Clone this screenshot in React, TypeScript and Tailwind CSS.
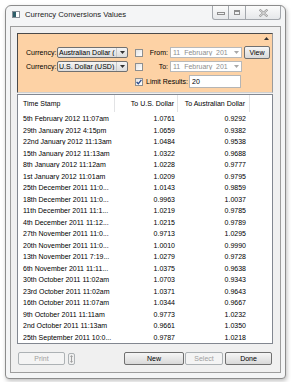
const ROWS: [string, string, string][] = [
  ['5th February 2012 11:07am', '1.0761', '0.9292'],
  ['29th January 2012 4:15pm', '1.0659', '0.9382'],
  ['22nd January 2012 11:13am', '1.0484', '0.9538'],
  ['15th January 2012 11:13am', '1.0322', '0.9688'],
  ['8th January 2012 11:12am', '1.0228', '0.9777'],
  ['1st January 2012 11:01am', '1.0209', '0.9795'],
  ['25th December 2011 11:0...', '1.0143', '0.9859'],
  ['18th December 2011 11:0...', '0.9963', '1.0037'],
  ['11th December 2011 11:1...', '1.0219', '0.9785'],
  ['4th December 2011 11:12...', '1.0215', '0.9789'],
  ['27th November 2011 11:0...', '0.9713', '1.0295'],
  ['20th November 2011 11:0...', '1.0010', '0.9990'],
  ['13th November 2011 7:19...', '1.0279', '0.9728'],
  ['6th November 2011 11:11...', '1.0375', '0.9638'],
  ['30th October 2011 11:02am', '1.0703', '0.9343'],
  ['23rd October 2011 11:02am', '1.0371', '0.9643'],
  ['16th October 2011 11:07am', '1.0344', '0.9667'],
  ['9th October 2011 11:11am', '0.9773', '1.0232'],
  ['2nd October 2011 11:13am', '0.9661', '1.0350'],
  ['25th September 2011 10:0...', '0.9787', '1.0218'],
]

function Arrow({ color = '#333' }: { color?: string }) {
  return (
    <svg width="5" height="3" viewBox="0 0 5 3">
      <path d="M0 0 H5 L2.5 3 Z" fill={color} />
    </svg>
  )
}

function Combo({ label }: { label: string }) {
  return (
    <div className="w-[71px] h-[11px] flex items-center border border-[#707070] rounded-[2px] bg-linear-to-b from-[#f4f4f4] to-[#dcdcdc]">
      <span className="flex-1 pl-[1px] overflow-hidden whitespace-nowrap">{label}</span>
      <span className="w-[11px] h-full flex items-center justify-center border-l border-[#c8c8c8]">
        <Arrow />
      </span>
    </div>
  )
}

function DateBox() {
  return (
    <div className="w-[72px] h-[11px] flex items-center border border-[#b9b9b9] bg-white text-[#8d8d8d]">
      <span className="flex-1 pl-[2px] whitespace-pre overflow-hidden">{'11  February  201'}</span>
      <span className="w-[9px] flex items-center justify-center">
        <Arrow color="#a8a8a8" />
      </span>
    </div>
  )
}

function Check({ on = false }: { on?: boolean }) {
  return (
    <div className="w-[8px] h-[8px] border border-[#8e8f8f] bg-linear-to-br from-[#e3e3e3] to-white flex items-center justify-center">
      {on && (
        <svg width="6" height="6" viewBox="0 0 6 6">
          <path d="M0.6 3 L2.3 4.8 L5.4 0.8" stroke="#2a4a8a" strokeWidth="1.3" fill="none" />
        </svg>
      )}
    </div>
  )
}

function Btn({ label, w, disabled = false }: { label: string; w: string; disabled?: boolean }) {
  return (
    <div
      className={
        disabled
          ? `${w} h-[13px] flex items-center justify-center rounded-[2px] border border-[#adb2b5] bg-[#f4f4f4] text-[#a0a0a0]`
          : `${w} h-[13px] flex items-center justify-center rounded-[2px] border border-[#707070] bg-linear-to-b from-[#f6f6f6] to-[#d9d9d9] text-black`
      }
    >
      {label}
    </div>
  )
}

export default function App() {
  return (
    <div className="w-[291px] h-[382px] bg-white pt-[5px] pl-[5px] font-['Liberation_Sans',Arial,sans-serif] text-[7px] leading-none text-black">
      <div className="w-[281px] h-[374px] rounded-t-[6px] rounded-b-[4px] border border-[#8c8c8c] bg-[#f4f5f6] shadow-[1px_2px_4px_rgba(0,0,0,0.25)] flex flex-col">
        {/* title bar */}
        <div className="h-[20px] flex items-start">
          <div className="mt-[5px] ml-[6px] w-[8px] h-[7px] border border-[#8a9099] bg-white flex">
            <div className="w-[3px] bg-[#2f5f6a]" />
          </div>
          <span className="mt-[5px] ml-[5px] text-[7.7px] text-[#222]">Currency Conversions Values</span>
          <div className="ml-auto mr-[4px] flex">
            <div className="w-[17px] h-[14px] border border-t-0 border-[#a3a7ac] rounded-bl-[3px] bg-linear-to-b from-[#fbfbfb] to-[#e6e8ea] flex items-center justify-center">
              <div className="mt-[2px] w-[8px] h-[3px] border border-[#8d8d8d]" />
            </div>
            <div className="w-[17px] h-[14px] border border-l-0 border-t-0 border-[#a3a7ac] bg-linear-to-b from-[#fbfbfb] to-[#e6e8ea] flex items-center justify-center">
              <div className="w-[6px] h-[5px] border border-[#8d8d8d] border-t-2" />
            </div>
            <div className="w-[35px] h-[14px] border border-l-0 border-t-0 border-[#a3a7ac] rounded-br-[3px] bg-linear-to-b from-[#fbfbfb] to-[#e6e8ea] flex items-center justify-center">
              <svg width="9" height="8" viewBox="0 0 9 8">
                <path d="M0.5 0.5 L8.5 7.5 M8.5 0.5 L0.5 7.5" stroke="#9a9a9a" strokeWidth="2.2" />
                <path d="M0.5 0.5 L8.5 7.5 M8.5 0.5 L0.5 7.5" stroke="#f2f2f2" strokeWidth="0.8" />
              </svg>
            </div>
          </div>
        </div>

        {/* client area */}
        <div className="ml-[4px] w-[271px] h-[347px] border border-[#9d9d9d] bg-[#f0f0f0] flex flex-col">
          {/* orange panel */}
          <div className="relative ml-[6px] mt-[6px] w-[256px] h-[60px] border border-[#4a4a4a] border-r-[#9a9a9a] border-b-[#d0d0d0] bg-[#fdd2a5] pt-[12px] pl-[8px] flex flex-col">
            <div className="absolute right-[2px] top-[1px] w-[7px] h-[7px] flex items-center justify-center">
              <svg width="5" height="3" viewBox="0 0 5 3">
                <path d="M0 3 H5 L2.5 0 Z" fill="#333" />
              </svg>
            </div>
            <div className="h-[13px] flex items-center">
              <span className="w-[31px]">Currency:</span>
              <Combo label="Australian Dollar (" />
              <div className="ml-[7px]"><Check /></div>
              <span className="w-[25px] text-right">From:</span>
              <div className="ml-[2px]"><DateBox /></div>
              <div className="ml-[2px] w-[26px] h-[13px] flex items-center justify-center rounded-[2px] border border-[#707070] bg-linear-to-b from-[#f6f6f6] to-[#d9d9d9]">
                View
              </div>
            </div>
            <div className="mt-[1px] h-[13px] flex items-center">
              <span className="w-[31px]">Currency:</span>
              <Combo label="U.S. Dollar (USD)" />
              <div className="ml-[7px]"><Check /></div>
              <span className="w-[25px] text-right">To:</span>
              <div className="ml-[2px]"><DateBox /></div>
            </div>
            <div className="mt-[2px] h-[13px] flex items-center">
              <div className="ml-[109px]"><Check on /></div>
              <span className="ml-[3px] w-[43px] whitespace-nowrap">Limit Results:</span>
              <div className="w-[52px] h-[13px] flex items-center border border-[#b5b5b5] bg-white pl-[2px]">20</div>
            </div>
          </div>

          {/* list */}
          <div className="ml-[6px] mt-[1px] w-[256px] h-[250px] border border-[#828790] bg-white flex flex-col">
            <div className="h-[17px] flex items-stretch">
              <div className="w-[97px] pl-[5px] flex items-center border-r border-[#e2e3e5]">Time Stamp</div>
              <div className="w-[63px] pr-[3px] flex items-center justify-end border-r border-[#e2e3e5]">To U.S. Dollar</div>
              <div className="w-[72px] pr-[4px] flex items-center justify-end border-r border-[#e2e3e5]">To Australian Dollar</div>
            </div>
            <div className="pt-[1px] flex flex-col">
              {ROWS.map(([t, us, au]) => (
                <div key={t} className="h-[11.5px] flex items-center">
                  <div className="w-[97px] pl-[5px] whitespace-nowrap overflow-hidden">{t}</div>
                  <div className="w-[63px] pr-[3px] text-right">{us}</div>
                  <div className="w-[72px] pr-[4px] text-right">{au}</div>
                </div>
              ))}
            </div>
          </div>

          {/* buttons */}
          <div className="mt-[8px] ml-[7px] flex items-center">
            <Btn label="Print" w="w-[47px]" disabled />
            <div className="ml-[3px] w-[7px] h-[12px] rounded-[2px] border border-[#adb2b5] flex items-center justify-center">
              <svg width="3" height="8" viewBox="0 0 3 8">
                <path d="M1.5 0 L3 2 H0 Z M1.5 8 L3 6 H0 Z M1 2 H2 V6 H1 Z" fill="#a0a0a0" />
              </svg>
            </div>
            <div className="ml-[49px]"><Btn label="New" w="w-[60px]" /></div>
            <div className="ml-[1px]"><Btn label="Select" w="w-[38px]" disabled /></div>
            <div className="ml-[2px]"><Btn label="Done" w="w-[47px]" /></div>
          </div>
        </div>
      </div>
    </div>
  )
}
